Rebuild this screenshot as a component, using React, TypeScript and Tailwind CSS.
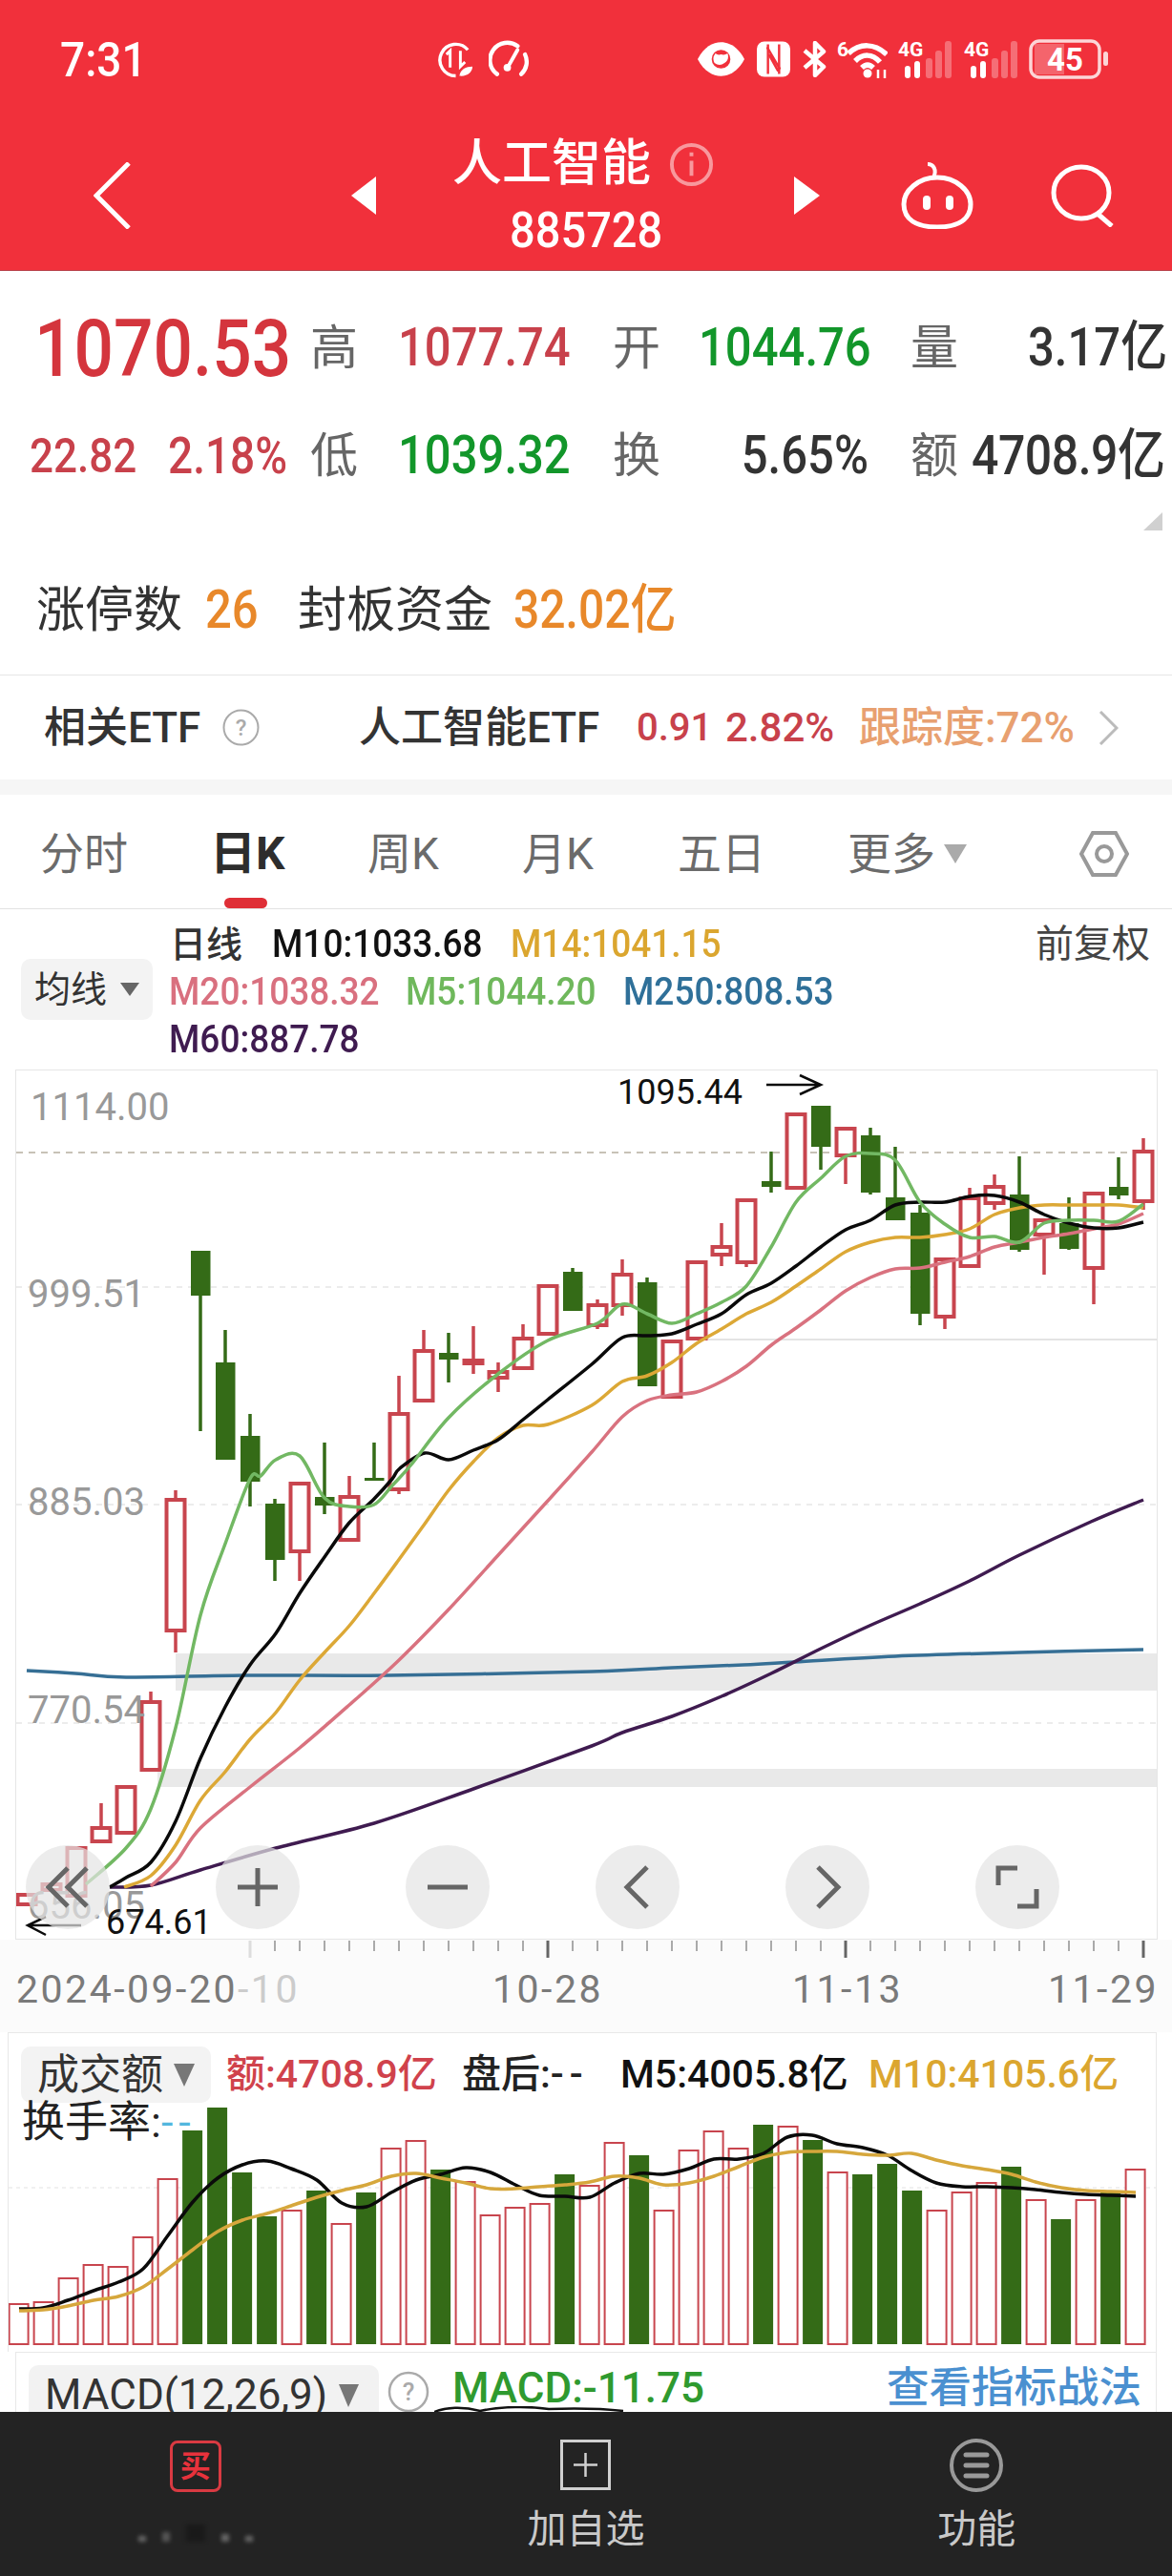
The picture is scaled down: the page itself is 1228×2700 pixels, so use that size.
const RED = '#c8454e';
const GREEN = '#346b17';

// [high, bodyTop, bodyBottom, low, up?] in page px, one per trading day
const candles: [number, number, number, number, boolean][] = [
  [1986, 1986, 1996, 1996, true],
  [1975, 1975, 1981, 1981, true],
  [1937, 1937, 1987, 1987, true],
  [1890, 1916, 1930, 1930, true],
  [1873, 1873, 1921, 1921, true],
  [1773, 1784, 1855, 1855, true],
  [1562, 1572, 1709, 1732, true],
  [1311, 1311, 1358, 1500, false],
  [1394, 1428, 1530, 1530, false],
  [1482, 1505, 1553, 1579, false],
  [1571, 1576, 1635, 1657, false],
  [1555, 1555, 1626, 1657, true],
  [1512, 1569, 1578, 1587, false],
  [1547, 1569, 1614, 1614, true],
  [1512, 1549, 1552, 1552, false],
  [1442, 1482, 1561, 1566, true],
  [1394, 1416, 1468, 1468, true],
  [1397, 1418, 1425, 1449, false],
  [1390, 1426, 1429, 1440, true],
  [1428, 1438, 1444, 1459, true],
  [1388, 1403, 1434, 1436, true],
  [1348, 1348, 1398, 1398, true],
  [1329, 1333, 1374, 1374, false],
  [1362, 1368, 1389, 1393, true],
  [1320, 1336, 1368, 1379, true],
  [1339, 1344, 1453, 1453, false],
  [1406, 1406, 1464, 1464, true],
  [1323, 1323, 1403, 1403, true],
  [1282, 1307, 1315, 1327, true],
  [1258, 1258, 1323, 1328, true],
  [1207, 1238, 1244, 1250, false],
  [1168, 1168, 1245, 1245, true],
  [1159, 1159, 1202, 1226, false],
  [1183, 1183, 1211, 1241, true],
  [1182, 1190, 1250, 1252, false],
  [1202, 1255, 1279, 1279, false],
  [1263, 1271, 1377, 1389, false],
  [1320, 1320, 1380, 1393, true],
  [1245, 1256, 1327, 1329, true],
  [1231, 1244, 1261, 1268, true],
  [1212, 1252, 1310, 1312, false],
  [1279, 1279, 1294, 1336, true],
  [1255, 1282, 1309, 1310, false],
  [1251, 1251, 1329, 1367, true],
  [1213, 1244, 1253, 1257, false],
  [1193, 1207, 1259, 1268, true],
];

const m5 = '90,1975 132,1937 158,1896 184,1811 210,1693 236,1618 262,1550 273,1547 289,1530 314,1526 340,1570 366,1579 392,1577 411,1557 431,1535 470,1486 522,1440 574,1405 626,1387 652,1367 678,1377 704,1387 730,1377 756,1365 782,1348 808,1307 834,1260 860,1235 886,1212 912,1209 938,1216 964,1260 990,1283 1016,1297 1042,1296 1068,1302 1094,1282 1120,1279 1146,1279 1172,1280 1198,1262';
const m10 = '115,1978 132,1968 158,1952 184,1909 210,1843 236,1789 262,1745 289,1712 314,1670 340,1632 366,1596 392,1571 411,1550 419,1539 445,1523 470,1530 496,1520 522,1509 548,1488 574,1467 620,1430 652,1402 678,1400 704,1398 730,1388 756,1377 782,1357 808,1345 834,1327 860,1307 886,1289 912,1279 938,1263 964,1260 990,1260 1016,1254 1042,1253 1068,1260 1094,1273 1120,1282 1146,1287 1172,1287 1198,1281';
const m14 = '130,1978 158,1966 184,1934 210,1887 236,1857 262,1823 289,1795 314,1761 340,1732 366,1704 392,1670 417,1636 443,1600 470,1562 496,1532 522,1507 548,1494 574,1493 620,1473 652,1448 678,1442 704,1428 730,1408 756,1393 782,1377 808,1365 834,1348 860,1330 886,1312 912,1302 938,1297 964,1297 990,1294 1016,1288 1042,1273 1068,1266 1094,1263 1120,1263 1146,1263 1172,1263 1198,1266';
const m20 = '158,1977 184,1952 210,1916 262,1873 314,1832 366,1787 417,1741 470,1687 522,1630 574,1573 620,1522 652,1485 678,1468 704,1462 730,1459 756,1448 782,1432 808,1410 834,1392 860,1373 886,1353 912,1339 938,1330 964,1329 990,1323 1016,1317 1042,1307 1068,1302 1094,1297 1120,1293 1146,1288 1172,1283 1198,1272';
const m60 = '115,1978 158,1976 210,1960 289,1937 392,1911 496,1875 620,1830 652,1816 704,1799 756,1778 808,1754 860,1728 911,1704 964,1681 1016,1657 1068,1630 1143,1595 1198,1572';
const m250 = '28,1751 79,1754 132,1758 261,1756 407,1756 620,1752 704,1748 779,1745 833,1742 938,1736 1068,1732 1198,1729';

// amount panel: bar top and green flag per day
const volumeBars: [number, boolean][] = [
  [2415, false], [2413, false], [2388, false], [2374, false], [2376, false], [2345, false], [2284, false],
  [2233, true], [2209, true], [2277, true], [2323, true], [2317, false], [2296, true], [2331, false],
  [2298, true], [2252, false], [2244, false], [2274, true], [2287, false], [2322, false], [2314, false],
  [2310, false], [2279, true], [2291, false], [2246, false], [2259, true], [2317, false], [2254, false],
  [2234, false], [2252, false], [2227, true], [2229, false], [2243, true], [2277, false], [2279, true],
  [2268, true], [2296, true], [2317, false], [2298, false], [2288, false], [2271, true], [2306, false],
  [2326, true], [2306, false], [2296, true], [2274, false],
];
const volM5 = '20,2420 45,2419 71,2411 98,2401 124,2392 150,2378 176,2343 202,2308 228,2283 254,2269 280,2265 305,2273 332,2285 358,2309 384,2313 410,2298 436,2285 462,2279 488,2272 514,2277 540,2290 565,2301 592,2302 618,2303 644,2288 670,2278 695,2279 722,2273 748,2263 774,2263 800,2257 825,2240 851,2238 877,2247 904,2251 930,2259 955,2275 981,2288 1008,2292 1034,2292 1060,2293 1085,2295 1112,2298 1138,2300 1164,2301 1190,2302';
const volM10 = '20,2422 45,2421 71,2417 98,2411 124,2407 150,2397 176,2378 202,2358 228,2339 254,2327 280,2320 305,2312 332,2303 358,2296 384,2290 410,2281 436,2278 462,2283 488,2288 514,2294 540,2294 565,2292 592,2290 618,2287 644,2281 670,2283 695,2290 722,2288 748,2281 774,2271 800,2261 825,2256 851,2255 877,2255 904,2258 930,2259 955,2257 981,2264 1008,2270 1034,2274 1060,2279 1085,2287 1112,2293 1138,2296 1164,2297 1190,2298';

// catmull-rom through the measured points so the averages don't look kinked
function smooth(points: string) {
  const p = points.split(' ').map((s) => s.split(',').map(Number));
  let d = `M${p[0][0]} ${p[0][1]}`;
  for (let i = 0; i < p.length - 1; i++) {
    const a = p[Math.max(i - 1, 0)];
    const b = p[i];
    const c = p[i + 1];
    const e = p[Math.min(i + 2, p.length - 1)];
    const c1x = b[0] + (c[0] - a[0]) / 6;
    const c1y = b[1] + (c[1] - a[1]) / 6;
    const c2x = c[0] - (e[0] - b[0]) / 6;
    const c2y = c[1] - (e[1] - b[1]) / 6;
    d += `C${c1x} ${c1y} ${c2x} ${c2y} ${c[0]} ${c[1]}`;
  }
  return d;
}

function PriceChart() {
  return (
    <svg viewBox="17 1122 1195 910" width={1195} height={910} className="block">
      <rect x={184} y={1733} width={1028} height={39} fill="#e9e9e9" />
      <rect x={165} y={1854} width={1047} height={19} fill="#e9e9e9" />
      <line x1={17} x2={1212} y1={1208} y2={1208} stroke="#b5afa0" strokeWidth={1.5} strokeDasharray="7 6" />
      {[1349, 1577, 1806].map((y) => (
        <line key={y} x1={17} x2={1212} y1={y} y2={y} stroke="#e6e6e6" strokeWidth={1.5} strokeDasharray="6 6" />
      ))}
      <line x1={740} x2={1212} y1={1404} y2={1404} stroke="#e4e4e4" strokeWidth={2} />
      {candles.map(([high, top, bottom, low, up], i) => {
        const x = 28 + 26 * i;
        return (
          <g key={i}>
            <line x1={x} x2={x} y1={high} y2={low} stroke={up ? RED : GREEN} strokeWidth={3.5} />
            {up ? (
              <rect x={x - 9.5} y={top} width={19} height={bottom - top} fill="#fff" stroke={RED} strokeWidth={4} />
            ) : (
              <rect x={x - 10} y={top} width={20.5} height={bottom - top} fill={GREEN} />
            )}
          </g>
        );
      })}
      <g fill="none" strokeWidth={3.5} strokeLinejoin="round">
        <path d={smooth(m250)} stroke="#366f95" />
        <path d={smooth(m60)} stroke="#3f1b50" />
        <path d={smooth(m20)} stroke="#d9727f" />
        <path d={smooth(m14)} stroke="#dca836" />
        <path d={smooth(m10)} stroke="#0a0a0a" />
        <path d={smooth(m5)} stroke="#72b863" />
      </g>
      <g fill="none" stroke="#0a0a0a" strokeWidth={2.5}>
        <path d="M803 1137H859M838 1127L860 1137L838 1147" />
        <path d="M30 2018H85M48 2009L29 2018L48 2028" />
      </g>
    </svg>
  );
}

function VolumeChart() {
  return (
    <svg viewBox="9 2131 1202 334" width={1202} height={334} className="absolute inset-0">
      <line x1={9} x2={1211} y1={2293} y2={2293} stroke="#e2e2e2" strokeDasharray="4 4" />
      {volumeBars.map(([top, down], i) => {
        const x = 19.6 + 26 * i;
        return down ? (
          <rect key={i} x={x - 10.5} y={top} width={21} height={2457 - top} fill={GREEN} />
        ) : (
          <rect key={i} x={x - 10} y={top} width={20} height={2457 - top} fill="#fff" stroke={RED} strokeWidth={2} />
        );
      })}
      <g fill="none" strokeWidth={3.5} strokeLinejoin="round">
        <path d={smooth(volM5)} stroke="#0a0a0a" />
        <path d={smooth(volM10)} stroke="#d6a73c" />
      </g>
    </svg>
  );
}

function RoundButton({ children }: { children: React.ReactNode }) {
  return (
    <div className="flex h-[88px] w-[88px] items-center justify-center rounded-full bg-[#e4e4e4]/70">
      <svg viewBox="0 0 48 48" className="h-[48px] w-[48px]" fill="none" stroke="#666" strokeWidth={5}>
        {children}
      </svg>
    </div>
  );
}

function SignalIcon() {
  return (
    <svg viewBox="0 0 56 40" className="h-[40px] w-[56px]">
      <text x={0} y={17} fontSize={21} fontWeight={700} fill="#fff">4G</text>
      <rect x={7} y={27} width={6} height={13} rx={3} fill="#fff" />
      <rect x={17} y={22} width={6} height={18} rx={3} fill="#fff" />
      <rect x={29} y={19} width={7} height={21} rx={3} fill="#fff" opacity={0.3} />
      <rect x={39} y={11} width={7} height={29} rx={3} fill="#fff" opacity={0.3} />
      <rect x={49} y={1} width={7} height={39} rx={3} fill="#fff" opacity={0.3} />
    </svg>
  );
}

function StatusBar() {
  return (
    <div className="box-content flex h-[44px] items-center pl-[63px] pt-[40px] text-white">
      <span className="w-[395px] origin-left scale-y-[1.1] text-[46px] font-medium leading-none">7:31</span>
      <svg viewBox="0 0 40 40" className="h-[40px] w-[39px]" fill="none" stroke="#fff" strokeWidth={3.5}>
        <path d="M33 10A17 17 0 1 0 20 38" />
        <path d="M14 29V11L10 15M25 11V28L30 23" strokeWidth={3} />
        <path d="M24 38C25 31 31 28 38 28C38 34 32 39 24 38Z" fill="#fff" stroke="none" />
      </svg>
      <svg viewBox="0 0 44 40" className="ml-[15px] h-[40px] w-[43px]" fill="none" stroke="#fff" strokeWidth={4.5} strokeLinecap="round">
        <path d="M9 36A18 18 0 0 1 31 6M39 15A18 18 0 0 1 35 36" />
        <path d="M31 10L22 26" strokeWidth={4} />
        <circle cx={20} cy={29} r={4} fill="#fff" stroke="none" />
      </svg>
      <svg viewBox="0 0 52 38" className="ml-[175px] h-[38px] w-[51px]">
        <path d="M1 19C8 6 17 1 26 1S44 6 51 19C44 32 35 37 26 37S8 32 1 19Z" fill="#fff" />
        <circle cx={26} cy={19} r={10} fill="#f1303b" />
        <path d="M19 23A9 9 0 0 0 33 13A8 8 0 0 1 26 14A6 6 0 0 1 20 13A9 9 0 0 0 19 23Z" fill="#fff" />
      </svg>
      <svg viewBox="0 0 36 38" className="ml-[12px] h-[38px] w-[35px]">
        <rect x={0} y={0} width={36} height={38} rx={8} fill="#fff" />
        <path d="M12 3V35M24 3V35" fill="none" stroke="#f1303b" strokeWidth={2.5} />
        <path d="M11 6L25 30M13 14L23 32" fill="none" stroke="#f1303b" strokeWidth={2.5} />
      </svg>
      <svg viewBox="0 0 25 38" className="ml-[13px] h-[38px] w-[25px]" fill="none" stroke="#fff" strokeWidth={4.5} strokeLinejoin="round">
        <path d="M2 10L22 27L13 36V2L22 11L2 28" />
      </svg>
      <svg viewBox="0 0 53 40" className="ml-[11px] h-[40px] w-[53px]" fill="none" stroke="#fff" strokeWidth={5.5}>
        <text x={0} y={17} fontSize={21} fontWeight={700} fill="#fff" stroke="none">6</text>
        <path d="M12 14C24 3 39 3 52 15M19 22C27 14 37 14 45 23M26 29C30 25 34 25 38 29" />
        <circle cx={32} cy={35} r={4.5} fill="#fff" stroke="none" />
        <path d="M43 31V40M50 31V40" strokeWidth={2.5} />
      </svg>
      <div className="ml-[11px]"><SignalIcon /></div>
      <div className="ml-[13px]"><SignalIcon /></div>
      <svg viewBox="0 0 84 42" className="ml-[12px] h-[42px] w-[84px]">
        <rect x={2} y={2} width={72} height={38} rx={9} fill="none" stroke="#fff" strokeOpacity={0.8} strokeWidth={3.5} />
        <path d="M6 5H37V37H6Z" fill="#fff" opacity={0.25} />
        <text x={38} y={33} textAnchor="middle" fontSize={33} fontWeight={700} fill="#fff">45</text>
        <rect x={78} y={13} width={5} height={15} rx={2.5} fill="#fff" opacity={0.8} />
      </svg>
    </div>
  );
}

function NavBar() {
  return (
    <div className="mt-[56px] flex h-[130px] items-center text-white">
      <svg viewBox="0 0 39 70" className="ml-[98px] h-[70px] w-[39px]" fill="none" stroke="#fff" strokeWidth={5}>
        <path d="M37 1L3 35L37 69" />
      </svg>
      <svg viewBox="0 0 26 40" className="ml-[231px] h-[40px] w-[26px]" fill="#fff"><path d="M26 0V40L0 20Z" /></svg>
      <div className="ml-[80px] flex w-[274px] flex-col">
        <div className="flex items-center whitespace-nowrap">
          <span className="shrink-0 text-[52px] font-medium leading-[56px]">人工智能</span>
          <svg viewBox="0 0 48 48" className="ml-[19px] h-[47px] w-[47px] shrink-0" fill="none" stroke="#fff" strokeOpacity={0.5} strokeWidth={4}>
            <circle cx={24} cy={24} r={21} />
            <path d="M24 20V36M24 11V15" />
          </svg>
        </div>
        <span className="mt-[16px] origin-left scale-y-[1.1] pl-[60px] text-[47px] font-medium leading-[50px]">885728</span>
      </div>
      <svg viewBox="0 0 27 40" className="ml-[84px] h-[40px] w-[27px]" fill="#fff"><path d="M0 0V40L27 20Z" /></svg>
      <svg viewBox="0 0 76 70" className="ml-[85px] h-[70px] w-[76px]" fill="none" stroke="#fff" strokeWidth={5}>
        <path d="M28 2C34 2 38 8 34 16" strokeWidth={4} />
        <path d="M38 16C18 16 3 30 3 44C3 60 16 68 38 68S73 60 73 44C73 30 58 16 38 16Z" />
        <rect x={23} y={35} width={8} height={15} rx={4} fill="#fff" stroke="none" />
        <rect x={47} y={35} width={8} height={15} rx={4} fill="#fff" stroke="none" />
      </svg>
      <svg viewBox="0 0 67 66" className="ml-[80px] h-[66px] w-[67px]" fill="none" stroke="#fff" strokeWidth={5}>
        <ellipse cx={33} cy={30} rx={29} ry={27} />
        <path d="M50 52L65 65" />
      </svg>
    </div>
  );
}

export default function App() {
  return (
    <div className="relative h-[2700px] w-[1228px] overflow-hidden bg-white font-[Roboto,'Noto_Sans_CJK_SC',sans-serif] font-medium">
      <div className="h-[284px] border-b border-[#b8424a] bg-[#f1303b]">
        <StatusBar />
        <NavBar />
      </div>

      {/* quote block */}
      <div className="h-[424px] border-b border-[#e6e6e6] pt-[50px]">
        <div className="flex h-[62px] items-center pl-[36px]">
          <span className="w-[289px] origin-left scale-y-[1.15] text-[73px] leading-none text-[#d4353d]">1070.53</span>
          <span className="w-[92px] text-[50px] font-normal text-[#666]">高</span>
          <span className="w-[225px] origin-left scale-y-[1.15] text-[49px] text-[#c8414b]">1077.74</span>
          <span className="w-[90px] text-[50px] font-normal text-[#666]">开</span>
          <span className="w-[222px] origin-left scale-y-[1.15] text-[49px] text-[#12962a]">1044.76</span>
          <span className="w-[123px] text-[50px] font-normal text-[#666]">量</span>
          <span className="origin-left scale-y-[1.15] whitespace-nowrap text-[49px] text-[#333]">3.17亿</span>
        </div>
        <div className="mt-[51px] flex h-[62px] items-center pl-[31px]">
          <span className="w-[145px] origin-left scale-y-[1.15] text-[44px] text-[#c8414b]">22.82</span>
          <span className="w-[149px] origin-left scale-y-[1.15] text-[46px] text-[#c8414b]">2.18%</span>
          <span className="w-[92px] text-[50px] font-normal text-[#666]">低</span>
          <span className="w-[225px] origin-left scale-y-[1.15] text-[49px] text-[#12962a]">1039.32</span>
          <span className="w-[90px] text-[50px] font-normal text-[#666]">换</span>
          <span className="w-[178px] origin-left scale-y-[1.15] text-right text-[49px] text-[#333]">5.65%</span>
          <span className="ml-[44px] w-[64px] text-[50px] font-normal text-[#666]">额</span>
          <span className="origin-left scale-y-[1.15] whitespace-nowrap text-[50px] tracking-[-0.5px] text-[#333]">4708.9亿</span>
        </div>
        <div className="mt-[28px] flex h-[19px] justify-end pr-[10px]">
          <svg viewBox="0 0 20 19" className="h-[19px] w-[20px]" fill="#d0d0d0"><path d="M20 0V19H0Z" /></svg>
        </div>
        <div className="mt-[53px] flex h-[62px] items-center pl-[38px]">
          <span className="w-[177px] text-[51px] font-normal text-[#333]">涨停数</span>
          <span className="w-[97px] origin-left scale-y-[1.15] text-[49px] text-[#e8882a]">26</span>
          <span className="w-[226px] text-[51px] font-normal text-[#333]">封板资金</span>
          <span className="origin-left scale-y-[1.15] whitespace-nowrap text-[48px] text-[#e8882a]">32.02亿</span>
        </div>
      </div>

      {/* related ETF */}
      <div className="flex h-[109px] items-center pl-[46px] text-[44px]">
        <span className="w-[187px] text-[#333]">相关ETF</span>
        <svg viewBox="0 0 39 39" className="h-[39px] w-[39px]" fill="none" stroke="#aaa" strokeWidth={2}>
          <circle cx={19.5} cy={19.5} r={18} />
          <text x={19.5} y={28} textAnchor="middle" fontSize={24} fill="#aaa" stroke="none">?</text>
        </svg>
        <span className="ml-[104px] w-[291px] text-[#333]">人工智能ETF</span>
        <span className="w-[93px] text-[40px] text-[#c8414b]">0.91</span>
        <span className="w-[140px] text-[42px] text-[#c8414b]">2.82%</span>
        <span className="w-[251px] whitespace-nowrap text-[#e8a070]">跟踪度:72%</span>
        <svg viewBox="0 0 21 36" className="h-[36px] w-[21px]" fill="none" stroke="#bbb" strokeWidth={3}>
          <path d="M2 1L19 18L2 35" />
        </svg>
      </div>
      <div className="h-[16px] bg-[#f6f6f6]" />

      {/* period tabs */}
      <div className="relative flex h-[120px] items-center border-b border-[#e2e2e2] pl-[42px] pt-[5px] text-[46px] font-normal text-[#6b6b6b]">
        <span className="w-[178px]">分时</span>
        <span className="w-[165px] text-[48px] font-bold text-[#2d2d2d]">日K</span>
        <span className="w-[162px]">周K</span>
        <span className="w-[163px]">月K</span>
        <span className="w-[178px]">五日</span>
        <span className="w-[101px]">更多</span>
        <svg viewBox="0 0 24 20" className="h-[20px] w-[24px]" fill="#aaa"><path d="M0 0H24L12 20Z" /></svg>
        <svg viewBox="0 0 52 50" className="ml-[118px] h-[50px] w-[52px]" fill="none" stroke="#999" strokeWidth={4}>
          <path d="M14 3H38L50 25L38 47H14L2 25Z" />
          <circle cx={26} cy={25} r={8} />
        </svg>
        <div className="absolute bottom-0 left-[235px] h-[11px] w-[45px] rounded-full bg-[#df2f37]" />
      </div>

      {/* moving average legend */}
      <div className="flex h-[168px]">
        <div className="ml-[22px] mt-[52px] flex h-[64px] w-[138px] items-center rounded-[10px] bg-[#f3f3f3] pl-[14px] text-[38px] font-normal text-[#333]">
          均线
          <svg viewBox="0 0 20 14" className="ml-[14px] h-[14px] w-[20px]" fill="#666"><path d="M0 0H20L10 14Z" /></svg>
        </div>
        <div className="ml-[17px] flex-1 pt-[12px] text-[37px] leading-[50px]">
          <div className="flex items-center">
            <span className="ml-[1px] w-[107px] text-[38px] text-[#333]">日线</span>
            <span className="w-[250px] origin-left scale-y-[1.1] text-[#111]">M10:1033.68</span>
            <span className="origin-left scale-y-[1.1] text-[#dba62f]">M14:1041.15</span>
            <span className="ml-auto mr-[23px] text-[40px] font-normal text-[#444]">前复权</span>
          </div>
          <div className="flex">
            <span className="w-[248px] origin-left scale-y-[1.1] text-[#d9707f]">M20:1038.32</span>
            <span className="w-[228px] origin-left scale-y-[1.1] text-[#6fb85c]">M5:1044.20</span>
            <span className="origin-left scale-y-[1.1] text-[#2f7099]">M250:808.53</span>
          </div>
          <div className="origin-left scale-y-[1.1] text-[#3f1b50]">M60:887.78</div>
        </div>
      </div>

      {/* price chart */}
      <div className="relative ml-[16px] h-[912px] w-[1197px] border border-[#e6e6e6] text-[40px] font-normal leading-none text-[#999]">
        <PriceChart />
        <span className="absolute left-[15px] top-[19px]">1114.00</span>
        <span className="absolute left-[12px] top-[215px]">999.51</span>
        <span className="absolute left-[12px] top-[433px]">885.03</span>
        <span className="absolute left-[12px] top-[651px]">770.54</span>
        <span className="absolute left-[12px] top-[856px]">656.05</span>
        <span className="absolute left-[630px] top-[5px] text-[36px] text-[#111]">1095.44</span>
        <span className="absolute left-[94px] top-[875px] text-[36px] text-[#111]">674.61</span>
        <div className="absolute left-[10px] top-[812px] flex gap-[111px]">
          <RoundButton><path d="M24 4L4 24L24 44M44 4L24 24L44 44" /></RoundButton>
          <RoundButton><path d="M3 24H45M24 4V44" /></RoundButton>
          <RoundButton><path d="M3 24H45" /></RoundButton>
          <RoundButton><path d="M34 3L13 24L34 45" /></RoundButton>
          <RoundButton><path d="M14 3L35 24L14 45" /></RoundButton>
          <RoundButton><path d="M4 22V4H24M44 26V44H24" /></RoundButton>
        </div>
      </div>

      {/* time axis */}
      <div className="h-[97px] bg-[#fbfbfb]">
        <svg viewBox="0 2033 1228 20" className="block h-[20px] w-[1228px]">
          {candles.map((_, i) => {
            if (i < 9) return null;
            const major = i === 21 || i === 33 || i === 45;
            const x = 28 + 26 * i;
            return (
              <line
                key={i}
                x1={x}
                x2={x}
                y1={2034}
                y2={major || i === 9 ? 2052 : 2045}
                stroke={i === 9 ? '#ddd' : major ? '#666' : '#aaa'}
                strokeWidth={major || i === 9 ? 3 : 2}
              />
            );
          })}
        </svg>
        <div className="mt-[9px] flex pl-[17px] text-[41px] font-normal leading-[46px] tracking-[2.5px] text-[#7a7a7a]">
          <span className="w-[499px] whitespace-nowrap">2024-09-20<span className="text-[#ccc]">-10</span></span>
          <span className="w-[314px]">10-28</span>
          <span className="w-[268px]">11-13</span>
          <span>11-29</span>
        </div>
      </div>

      {/* amount panel */}
      <div className="relative ml-[8px] h-[335px] w-[1204px] border-x border-t border-[#e8e8e8]">
        <VolumeChart />
        <div className="relative flex pl-[13px] pt-[14px] text-[41px]">
          <div className="flex h-[59px] w-[199px] items-center rounded-[10px] bg-[#f2f2f2]/90 pl-[17px] text-[44px] font-normal text-[#333]">
            成交额
            <svg viewBox="0 0 22 24" className="ml-[11px] h-[24px] w-[22px]" fill="#777"><path d="M0 0H22L11 24Z" /></svg>
          </div>
          <div className="ml-[16px] flex h-[59px] items-center whitespace-nowrap">
            <span className="w-[247px] text-[#d0424c]">额:4708.9亿</span>
            <span className="w-[166px] text-[#222]">盘后:<span className="tracking-[6px]">--</span></span>
            <span className="w-[260px] text-[#111]">M5:4005.8亿</span>
            <span className="text-[#dba62f]">M10:4105.6亿</span>
          </div>
        </div>
        <div className="relative ml-[14px] text-[45px] font-normal leading-[42px] text-[#222]">
          换手率:<span className="tracking-[6px] text-[#53b7de]">--</span>
        </div>
      </div>

      {/* MACD panel, cut off by the bottom bar */}
      <div className="relative ml-[16px] flex h-[63px] w-[1196px] overflow-hidden border-x border-t border-[#e8e8e8] pl-[13px] pt-[13px]">
        <div className="flex h-[70px] w-[367px] items-start rounded-[10px] bg-[#f2f2f2] pl-[17px] pt-[6px] text-[44px] font-normal leading-[50px] text-[#333]">
          MACD(12,26,9)
          <svg viewBox="0 0 21 24" className="ml-[12px] mt-[14px] h-[24px] w-[21px]" fill="#777"><path d="M0 0H21L10 24Z" /></svg>
        </div>
        <svg viewBox="0 0 44 44" className="ml-[9px] mt-[6px] h-[44px] w-[44px]" fill="none" stroke="#aaa" strokeWidth={2.5}>
          <circle cx={22} cy={22} r={20} />
          <text x={22} y={31} textAnchor="middle" fontSize={26} fill="#aaa" stroke="none">?</text>
        </svg>
        <span className="ml-[24px] text-[44px] leading-[48px] text-[#2f9a2f]">MACD:-11.75</span>
        <span className="ml-auto mr-[15px] text-[44.5px] leading-[48px] text-[#4a90d0]">查看指标战法</span>
        <svg viewBox="0 0 200 6" className="absolute bottom-0 left-[438px] h-[6px] w-[200px]" fill="none" stroke="#111" strokeWidth={2.5}>
          <path d="M0 6C12 1 30 0 48 5C70 0 100 0 120 3C150 2 180 3 198 5" />
        </svg>
      </div>

      {/* bottom bar */}
      <div className="grid h-[172px] grid-cols-3 bg-[#232323] text-[41px] font-normal leading-[48px] text-[#c9c9c9]">
        <div className="flex flex-col items-center pt-[30px]">
          <div className="flex h-[54px] w-[54px] items-center justify-center rounded-[8px] border-[3px] border-[#d93a42] text-[32px] font-bold text-[#e8323c]">买</div>
          <div className="mt-[22px] flex h-[30px] w-[120px] items-end justify-between opacity-50 blur-[2px]">
            <span className="h-[6px] w-[8px] bg-[#aaa]" />
            <span className="h-[10px] w-[8px] bg-[#888]" />
            <span className="h-[18px] w-[20px] bg-[#111]" />
            <span className="h-[8px] w-[8px] bg-[#aaa]" />
            <span className="h-[6px] w-[8px] bg-[#aaa]" />
          </div>
        </div>
        <div className="flex flex-col items-center pt-[29px]">
          <svg viewBox="0 0 53 53" className="h-[53px] w-[53px]" fill="none" stroke="#d0d0d0" strokeWidth={3}>
            <rect x={1.5} y={1.5} width={50} height={50} />
            <path d="M14 26.5H39M26.5 14V39" strokeWidth={2.5} />
          </svg>
          <span className="mt-[17px]">加自选</span>
        </div>
        <div className="flex flex-col items-center pt-[28px]">
          <svg viewBox="0 0 56 56" className="h-[56px] w-[56px]" fill="none" stroke="#999" strokeWidth={4}>
            <circle cx={28} cy={28} r={26} />
            <path d="M17 17H39M17 28H39M17 39H39" strokeWidth={5} strokeLinecap="round" />
          </svg>
          <span className="mt-[15px]">功能</span>
        </div>
      </div>
    </div>
  );
}
